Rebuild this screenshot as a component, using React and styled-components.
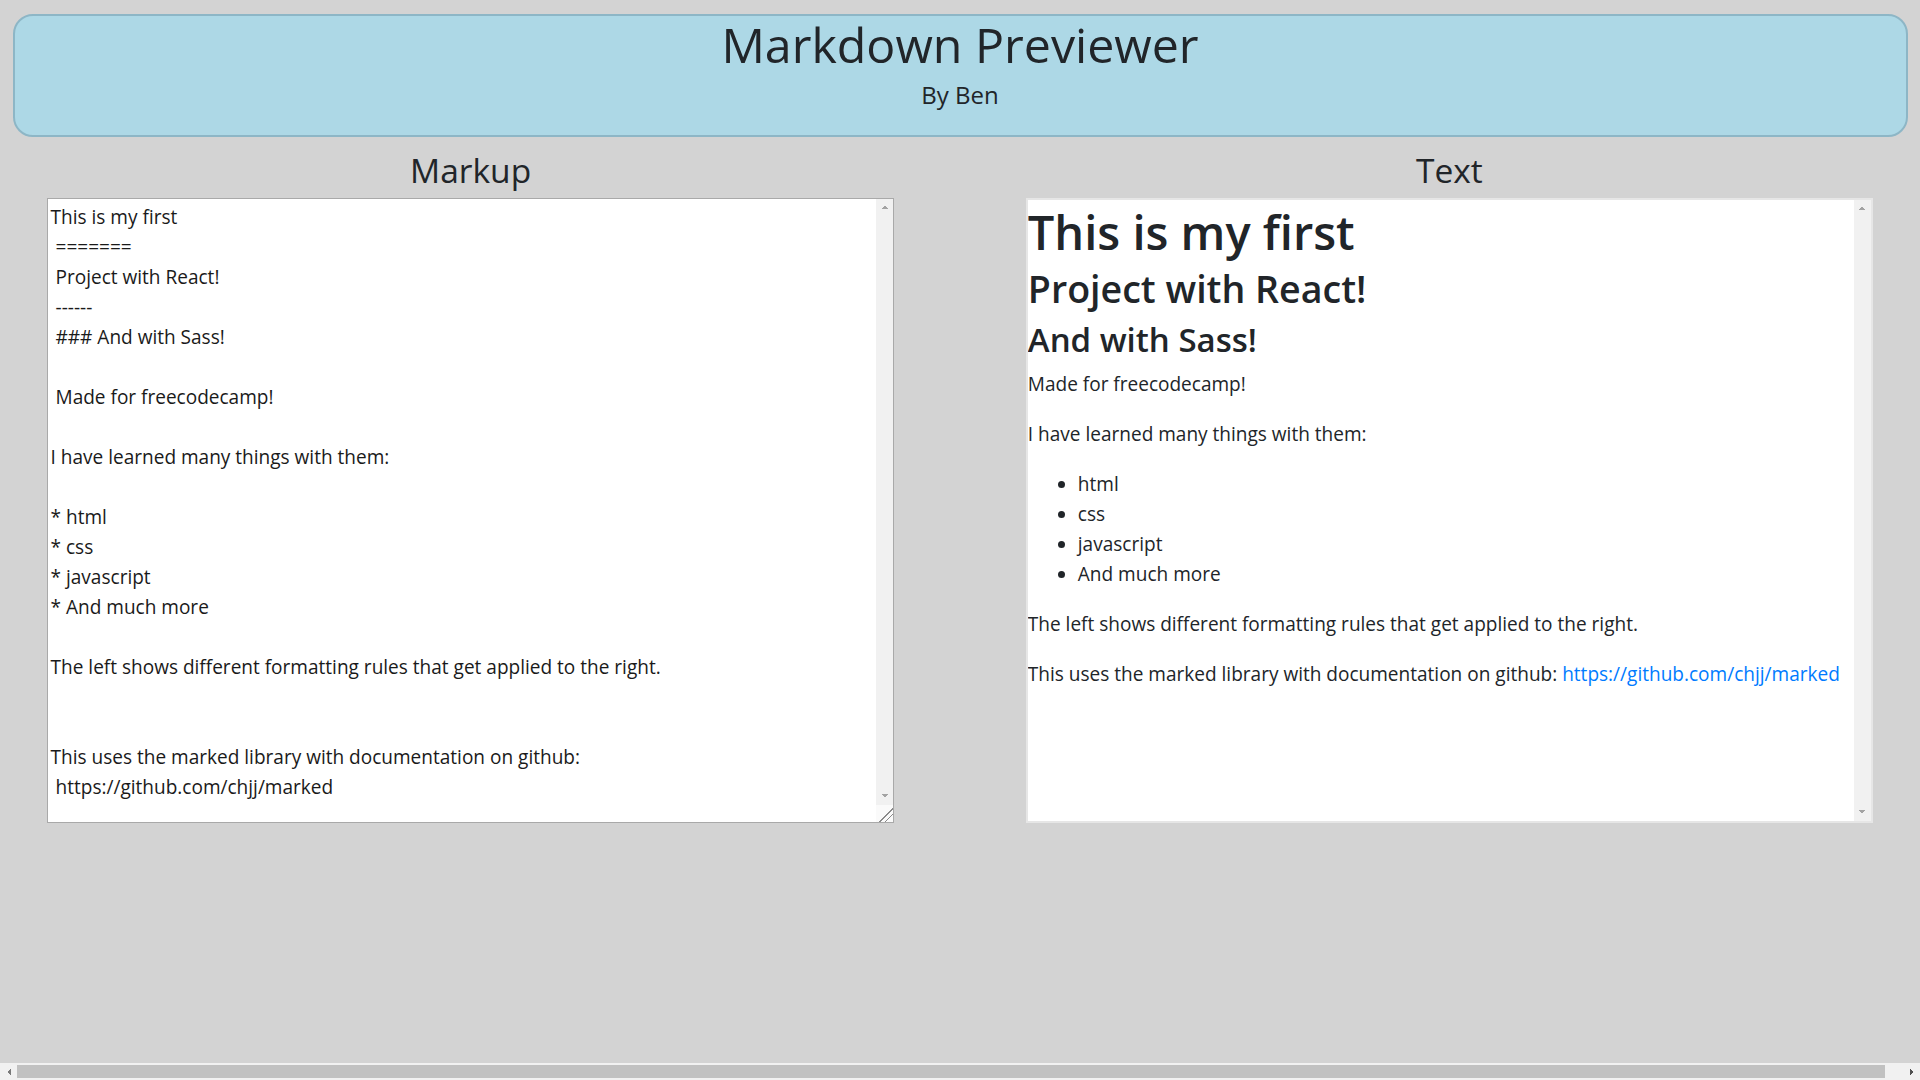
import React from 'react';
import styled, { createGlobalStyle } from 'styled-components';

const FONT = `"Open Sans", "Noto Sans", "Liberation Sans", sans-serif`;
const TEXT = '#212529';
const TRACK = '#f1f1f1';
const BODY_FS = 19.05;

const arrows = {
  up: (c) => `conic-gradient(from 140deg at 50% 0%, ${c} 80deg, transparent 0) center / 8px 4px no-repeat`,
  down: (c) => `conic-gradient(from -40deg at 50% 100%, ${c} 80deg, transparent 0) center / 8px 4px no-repeat`,
  left: (c) => `conic-gradient(from 50deg at 0% 50%, ${c} 80deg, transparent 0) center / 4px 8px no-repeat`,
  right: (c) => `conic-gradient(from 230deg at 100% 50%, ${c} 80deg, transparent 0) center / 4px 8px no-repeat`,
};

const GlobalStyle = createGlobalStyle`
  *, *::before, *::after { box-sizing: border-box; }
  html, body { margin: 0; padding: 0; }
  body {
    background: #d3d3d3;
    color: ${TEXT};
    font-family: ${FONT};
    font-size: ${BODY_FS}px;
    line-height: 30px;
  }
`;

const Page = styled.div`
  min-height: 100vh;
  display: flex;
  flex-direction: column;
  overflow: hidden;
`;

const Content = styled.div`
  flex: 1;
  padding-top: 14px;
`;

const Header = styled.header`
  margin: 0 12.5px 12px;
  padding: 0 0 24.5px;
  background: #add8e6;
  border: 2.5px solid #8db6c6;
  border-radius: 20px;
  text-align: center;
`;

const Title = styled.h1`
  margin: 0 0 6.5px;
  font-size: 48.3px;
  line-height: 57.6px;
  font-weight: 400;
  color: ${TEXT};
`;

const Byline = styled.h5`
  margin: 0;
  font-size: 24px;
  line-height: 30px;
  font-weight: 400;
  color: ${TEXT};
`;

const Row = styled.main`
  display: flex;
  margin: 0 -18.75px;
`;

const Column = styled.section`
  flex: 0 0 50%;
  max-width: 50%;
  padding: 0 18.75px;
  text-align: center;
`;

const PaneTitle = styled.h3`
  margin: 0 0 7.4px;
  font-size: 33.5px;
  line-height: 42px;
  font-weight: 400;
  color: ${TEXT};
`;

const Frame = styled.div`
  display: flex;
  width: 90%;
  height: 625px;
  margin: 0 auto;
  background: #fff;
  border: ${(p) => (p.$soft ? '2px solid #e6e6e6' : '1px solid #a9a9a9')};
  text-align: left;
`;

const Editor = styled.textarea`
  flex: 1;
  min-width: 0;
  height: 100%;
  margin: 0;
  padding: 3.5px 2.5px 2.5px;
  border: none;
  background: #fff;
  color: #1a1a1a;
  font-family: ${FONT};
  font-size: ${BODY_FS}px;
  line-height: 30px;
  overflow: hidden;
  resize: none;
  outline: none;
`;

const Preview = styled.div`
  flex: 1;
  min-width: 0;
  padding-top: 2px;
  overflow: hidden;
`;

const VScroll = styled.div`
  flex: 0 0 17px;
  display: flex;
  flex-direction: column;
  background: ${TRACK};
`;

const ScrollTrack = styled.div`
  flex: 1;
  display: flex;
  align-items: center;
`;

const ArrowButton = styled.div`
  flex: 0 0 17px;
  width: 17px;
  height: 17px;
  background: ${(p) => arrows[p.$dir](p.$color || '#a3a3a3')};
`;

const Resizer = styled.div`
  flex: 0 0 17px;
  height: 17px;
  background:
    linear-gradient(135deg, transparent 0 58%, #8a8a8a 58% 62%, transparent 62% 74%, #8a8a8a 74% 78%, transparent 78%),
    #fafafa;
`;

const HScroll = styled.div`
  flex: 0 0 17px;
  display: flex;
  height: 17px;
  background: ${TRACK};
`;

const Thumb = styled.div`
  width: 99.05%;
  height: 13px;
  background: #c1c1c1;
`;

const sizes = {
  1: { fs: 47, lh: 60, mb: 2.6 },
  2: { fs: 37.6, lh: 48, mb: 6.8 },
  3: { fs: 33, lh: 42, mb: 7.5 },
};

const MdHeading = styled.div`
  margin: 0 0 ${(p) => sizes[p.$level].mb}px;
  font-size: ${(p) => sizes[p.$level].fs}px;
  line-height: ${(p) => sizes[p.$level].lh}px;
  font-weight: 600;
  color: ${TEXT};
  white-space: nowrap;
`;

const Para = styled.p`
  margin: 0 0 20px;
  white-space: nowrap;
`;

const List = styled.ul`
  margin: 0 0 20px;
  padding-left: 50px;
`;

const Link = styled.a`
  color: #007bff;
  text-decoration: none;
`;

const SOURCE = `This is my first
 =======
 Project with React!
 ------
 ### And with Sass!

 Made for freecodecamp!

I have learned many things with them:

* html
* css
* javascript
* And much more

The left shows different formatting rules that get applied to the right.


This uses the marked library with documentation on github:
 https://github.com/chjj/marked`;

export default function App() {
  return (
    <Page>
      <GlobalStyle />
      <Content>
        <Header>
          <Title>Markdown Previewer</Title>
          <Byline>By Ben</Byline>
        </Header>
        <Row>
          <Column>
            <PaneTitle>Markup</PaneTitle>
            <Frame>
              <Editor id="editor" defaultValue={SOURCE} spellCheck={false} />
              <VScroll>
                <ArrowButton $dir="up" />
                <ScrollTrack />
                <ArrowButton $dir="down" />
                <Resizer />
              </VScroll>
            </Frame>
          </Column>
          <Column>
            <PaneTitle>Text</PaneTitle>
            <Frame $soft>
              <Preview id="preview">
                <MdHeading as="h1" $level={1}>This is my first</MdHeading>
                <MdHeading as="h2" $level={2}>Project with React!</MdHeading>
                <MdHeading as="h3" $level={3}>And with Sass!</MdHeading>
                <Para>Made for freecodecamp!</Para>
                <Para>I have learned many things with them:</Para>
                <List>
                  <li>html</li>
                  <li>css</li>
                  <li>javascript</li>
                  <li>And much more</li>
                </List>
                <Para>The left shows different formatting rules that get applied to the right.</Para>
                <Para>
                  This uses the marked library with documentation on github:{' '}
                  <Link href="https://github.com/chjj/marked">https://github.com/chjj/marked</Link>
                </Para>
              </Preview>
              <VScroll>
                <ArrowButton $dir="up" />
                <ScrollTrack />
                <ArrowButton $dir="down" />
              </VScroll>
            </Frame>
          </Column>
        </Row>
      </Content>
      <HScroll>
        <ArrowButton $dir="left" $color="#7a7a7a" />
        <ScrollTrack>
          <Thumb />
        </ScrollTrack>
        <ArrowButton $dir="right" $color="#505050" />
      </HScroll>
    </Page>
  );
}
